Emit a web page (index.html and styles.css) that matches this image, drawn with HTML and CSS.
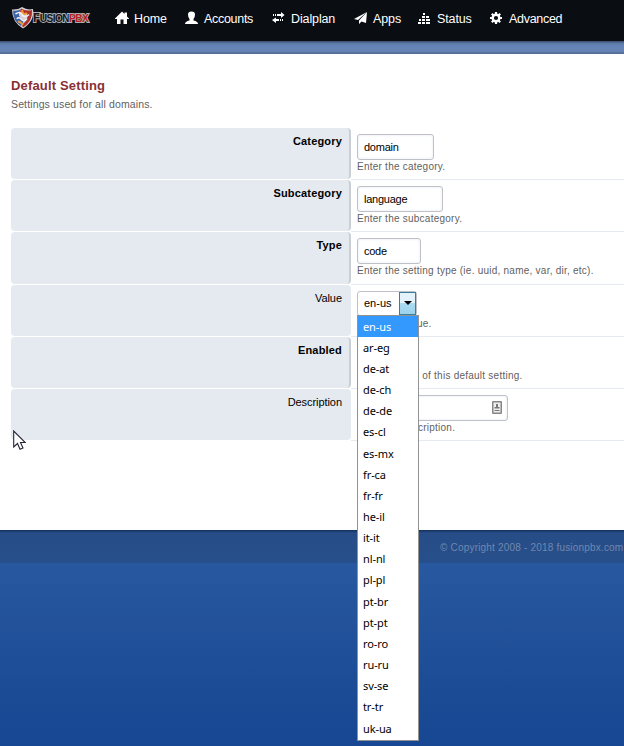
FILE: index.html
```html
<!DOCTYPE html>
<html lang="en">
<head>
<meta charset="utf-8">
<title>Default Setting</title>
<link rel="stylesheet" href="styles.css">
</head>
<body>
<header class="navbar">
  <div class="brand">
    <svg class="shield" width="24" height="23" viewBox="0 0 24 23">
      <path d="M1 2.500 Q7 3 11 0 Q16 3.500 22 2 Q24 14 12 21.500 Q1 15 1 2.500Z" fill="#d9d3d8"/>
      <path d="M2 3.500 Q7 4.500 10 2 L8 6 Q7 10 13 14 L10 19 Q2 14 2 3.500Z" fill="#3964a8"/>
      <path d="M10 1.500 Q15 4.500 21 3 Q22 14 12 20.500 L11 18 Q18 12 16 7 L9 5Z" fill="#ad302b"/>
      <path d="M4.500 7 Q9 4 11 7 Q13 12 18 7.500 M6 12 Q7 9 11 13 Q13 15 16 12" fill="none" stroke="#f3f0f4" stroke-width="1.600"/>
      <path d="M7 15 Q9 14 12 18 M11 3 Q12 9 16 6" fill="none" stroke="#ef9a36" stroke-width="2"/>
    </svg>
    <span class="wordmark"><b>F</b>USION<i>PBX</i></span>
  </div>
  <nav class="menu">
    <a class="w-home"><svg width="14" height="14" viewBox="0 0 14 14"><path d="M7 .5 9.5 3V1.5H12V5.5L14 7.5V8H12V13H8.5V8.5H5.5V13H2V8H0V7.5Z"/></svg><span>Home</span></a>
    <a class="w-accounts"><svg width="14" height="14" viewBox="0 0 14 14"><path d="M3 3.500Q3 .5 6.500 .5Q10 .5 10 3.500Q10 6.500 8.500 8V9.500Q13 10.500 13 13H0Q0 10.500 4.500 9.500V8Q3 6.500 3 3.500Z"/></svg><span>Accounts</span></a>
    <a class="w-dialplan"><svg width="14" height="14" viewBox="0 0 14 14"><path d="M1 3H2V5H1ZM3 3H4V5H3ZM5 3H9V1L12.500 4 9 7V5H5ZM10 8H11V10H10ZM8 8H9V10H8ZM7 8H4V6.500L0 9 4 12V10H7Z"/></svg><span>Dialplan</span></a>
    <a class="w-apps"><svg width="14" height="14" viewBox="0 0 14 14"><path d="M13 1 0 8 4 9Z"/><path d="M13 1 5 9.500V13L7.500 10.500 12 12Z"/></svg><span>Apps</span></a>
    <a class="w-status"><svg width="14" height="14" viewBox="0 0 14 14"><path d="M5 2H7V4H5ZM4 5H7V7H4ZM8 5H11V7H8ZM4 8H7V10H4ZM8 8H12V10H8ZM1 8H3V10H1ZM0 11H3V13H0ZM4 11H7V13H4ZM8 11H12V13H8Z"/></svg><span>Status</span></a>
    <a class="w-advanced"><svg width="14" height="14" viewBox="0 0 14 14"><g fill="none" stroke="#fff"><circle cx="6" cy="7" r="3.300" stroke-width="2.400"/><path d="M6 1V3.500M6 10.500V13M0 7H2.500M9.500 7H12M1.800 2.800 3.500 4.500M8.500 9.500 10.200 11.200M1.800 11.200 3.500 9.500M8.500 4.500 10.200 2.800" stroke-width="2.200"/></g></svg><span>Advanced</span></a>
  </nav>
</header>
<div class="strip"></div>
<main class="content">
  <h1><span>Default Setting</span></h1>
  <p class="intro">Settings used for all domains.</p>
  <form class="settings">
    <div class="row"><div class="label required"><span>Category</span></div><div class="field"><div class="input category">domain</div><p>Enter the category.</p></div></div>
    <div class="row"><div class="label required"><span>Subcategory</span></div><div class="field"><div class="input subcategory">language</div><p>Enter the subcategory.</p></div></div>
    <div class="row"><div class="label required"><span>Type</span></div><div class="field"><div class="input type">code</div><p>Enter the setting type (ie. uuid, name, var, dir, etc).</p></div></div>
    <div class="row"><div class="label"><span>Value</span></div><div class="field"><div class="select"><span>en-us</span><div class="arrow"></div>
      <ul class="options"><li class="selected">en-us</li><li>ar-eg</li><li>de-at</li><li>de-ch</li><li>de-de</li><li>es-cl</li><li>es-mx</li><li>fr-ca</li><li>fr-fr</li><li>he-il</li><li>it-it</li><li>nl-nl</li><li>pl-pl</li><li>pt-br</li><li>pt-pt</li><li>ro-ro</li><li>ru-ru</li><li>sv-se</li><li>tr-tr</li><li>uk-ua</li></ul>
    </div><p class="help-value">ue.</p></div></div>
    <div class="row"><div class="label required"><span>Enabled</span></div><div class="field"><p class="help-enabled">s of this default setting.</p></div></div>
    <div class="row"><div class="label"><span>Description</span></div><div class="field"><div class="input description"><svg width="10" height="13" viewBox="0 0 10 13"><rect x=".75" y=".75" width="8.500" height="11.500" rx=".5" fill="#eee" stroke="#858585" stroke-width="1.500"/><path d="M4 3H6V6H7.500V7.500H2.500V6H4ZM2.500 9H7.500V10H2.500Z" fill="#777"/></svg></div><p class="help-description">cription.</p></div></div>
  </form>
</main>
<footer>© Copyright 2008 - 2018 fusionpbx.com</footer>
<svg class="cursor" width="13" height="21" viewBox="0 0 13 21"><path d="M.7 1V17L4.500 13.500 7 19.300 10 18 7.500 12.500H12.300Z" fill="#fff" stroke="#252538" stroke-width="1.100"/></svg>
</body>
</html>
```
FILE: styles.css
```css
* { box-sizing: border-box; }
body {
  margin: 0;
  width: 624px;
  height: 746px;
  position: relative;
  overflow: hidden;
  font-family: "Liberation Sans", Arial, sans-serif;
  background: linear-gradient(#6581b0 0, #6581b0 54px, #28589f 563px, #174692 746px);
}
h1, p, ul { margin: 0; padding: 0; }
.navbar { height: 41px; display: flex; background: #0a0d12; }
.brand { width: 115px; padding: 7px 0 0 11px; display: flex; }
.shield { flex: none; }
.wordmark {
  font-size: 10.2px;
  line-height: 23px;
  font-weight: bold;
  letter-spacing: -.6px;
  color: #15151a;
  -webkit-text-stroke: 1.8px #b0aeb2;
  paint-order: stroke fill;
  margin-left: -2px;
  white-space: nowrap;
}
.wordmark b { font-size: 12px; }
.wordmark i { font-style: normal; color: #b31e24; }
.menu { display: flex; padding-top: 11px; }
.menu a { display: flex; color: #fff; font-size: 12.5px; line-height: 16px; letter-spacing: -.12px; white-space: nowrap; }
.menu .w-accounts, .menu .w-advanced { letter-spacing: -.3px; }
.menu svg { fill: #fff; flex: none; margin-right: 5px; }
.w-home { width: 70px; }
.w-accounts { width: 87px; }
.w-dialplan { width: 82px; }
.w-apps { width: 64px; }
.w-status { width: 72px; }
.strip { height: 13px; background: linear-gradient(#354867 0, #5874a1 2px, #6482b4 4px, #6684b5 10px, #4f668d 13px); }
.content { height: 476px; background: #fff; padding: 23px 0 0 11px; }
h1 { height: 18px; font-size: 13px; line-height: 18px; color: #893034; letter-spacing: .16px; }
.intro { height: 33px; font-size: 10.5px; line-height: 18px; color: #5f5f5f; letter-spacing: .13px; }
.row { height: 52.2px; display: flex; }
.label {
  width: 340px;
  height: calc(100% - 1px);
  padding: 5px 9px 0 0;
  background: #e5e9f0;
  border-radius: 4px;
  text-align: right;
  font-size: 11px;
  line-height: 17px;
  letter-spacing: -.06px;
  color: #000;
}
.required { font-weight: bold; letter-spacing: .18px; padding-right: 7px; border-right: 2px solid #cbcfd5; }
.field { flex: 1; border-bottom: 1px solid #e5e9f0; padding: 6px 0 0 6px; }
.field p { font-size: 10px; line-height: 14px; letter-spacing: .24px; color: #5f5f5f; white-space: nowrap; }
.input {
  height: 26px;
  border: 1px solid #c0c0c9;
  border-radius: 3px;
  padding: 0 6px;
  font-size: 11px;
  line-height: 24px;
  letter-spacing: -.25px;
  background: #fff;
  box-shadow: inset 0 0 3px #e2e9f2;
}
.category { width: 77px; }
.subcategory { width: 86px; }
.type { width: 64px; }
.description { width: 151px; display: flex; justify-content: flex-end; align-items: center; padding-right: 5px; }
.select {
  width: 60px;
  height: 25px;
  position: relative;
  display: flex;
  justify-content: space-between;
  border: 1px solid #c0c0c9;
  border-radius: 3px;
  padding-left: 6px;
  font-size: 11px;
  line-height: 23px;
}
.arrow { width: 17px; height: 23px; border: 1px solid #3b7e9b; background: linear-gradient(#e4f3fb 45%, #abdcf2 50%, #9bd2ed); display: grid; place-items: center; }
.arrow::after { content: ""; border: 4px solid transparent; border-top-color: #000; border-bottom: 0; }
.options {
  position: absolute;
  left: -1px;
  top: 23px;
  width: 62px;
  height: 426px;
  border: 1px solid #929292;
  background: #fff;
  list-style: none;
  font-family: "Noto Sans", sans-serif;
  font-size: 11px;
  letter-spacing: -.1px;
  color: #000;
}
.options li { height: 21.16px; line-height: 21px; padding-left: 5px; }
.options .selected { color: #fff; background: #3399ff; }
.field .help-value { padding: 1px 0 0 60px; }
.field .help-enabled { padding: 26px 0 0 57px; }
.field .help-description { padding-left: 61px; }
footer {
  height: 33px;
  padding-left: 440px;
  line-height: 35px;
  white-space: nowrap;
  font-size: 10px;
  color: #6f88b1;
  letter-spacing: .19px;
  background: linear-gradient(#15315b, #264d86 3px, #274f8b);
}
.cursor { position: absolute; left: 13px; top: 430px; }
```
